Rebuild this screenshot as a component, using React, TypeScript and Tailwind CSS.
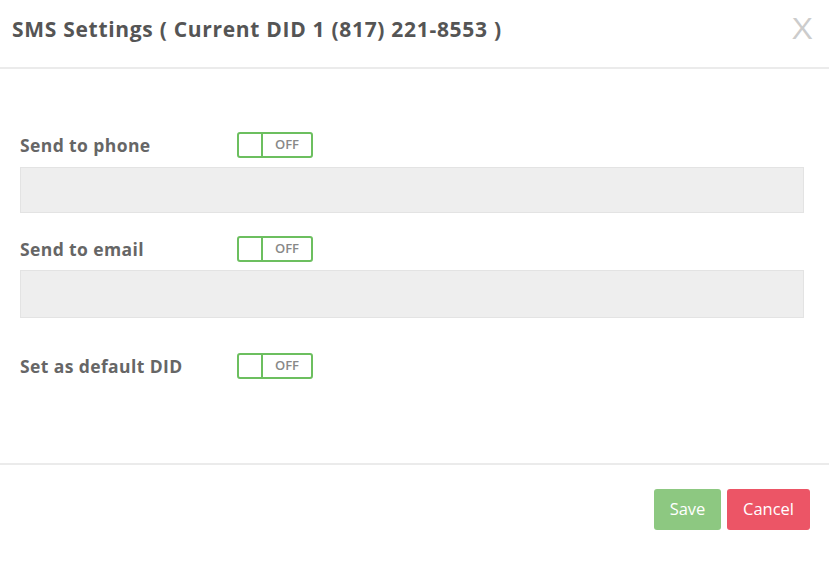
import React from 'react';

function Toggle() {
  return (
    <div className="flex h-[26px] w-[76px] overflow-hidden rounded-[3px] border-2 border-[#6cbf5f] bg-white">
      <div className="w-[24px] border-r-2 border-[#6cbf5f]" />
      <div className="flex flex-1 items-center justify-center text-[13px] font-semibold text-[#888]">OFF</div>
    </div>
  );
}

function Row({ label }: { label: string }) {
  return (
    <div className="flex h-[26px] items-center">
      <div className="w-[217px] text-[17.5px] font-bold tracking-[0.4px] text-[#666]">{label}</div>
      <Toggle />
    </div>
  );
}

export default function App() {
  return (
    <div className="h-[562px] w-[829px] bg-white" style={{ fontFamily: '"Open Sans", "Noto Sans", sans-serif' }}>
      <div className="flex h-[69px] items-start justify-between border-b-2 border-[#ebebeb] pl-[12px] pr-[18px]">
        <h1 className="mt-[14px] text-[21px] font-bold tracking-[0.7px] text-[#555]">SMS Settings ( Current DID 1 (817) 221-8553 )</h1>
        <span className="mt-[6px] scale-x-[1.2] text-[29px] font-normal text-[#cccccc]">X</span>
      </div>
      <div className="flex h-[396px] flex-col border-b-2 border-[#ebebeb] pl-[20px] pr-[25px] pt-[63px]">
        <Row label="Send to phone" />
        <div className="mt-[9px] h-[46px] border border-[#e3e3e3] bg-[#eeeeee]" />
        <div className="mt-[23px]">
          <Row label="Send to email" />
        </div>
        <div className="mt-[8px] h-[48px] border border-[#e3e3e3] bg-[#eeeeee]" />
        <div className="mt-[35px]">
          <Row label="Set as default DID" />
        </div>
      </div>
      <div className="flex justify-end gap-[6px] pr-[19px] pt-[24px]">
        <button className="h-[41px] w-[67px] rounded-[3px] bg-[#8dc881] text-[16.5px] text-white">Save</button>
        <button className="h-[41px] w-[83px] rounded-[3px] bg-[#ec5566] text-[16.5px] text-white">Cancel</button>
      </div>
    </div>
  );
}
